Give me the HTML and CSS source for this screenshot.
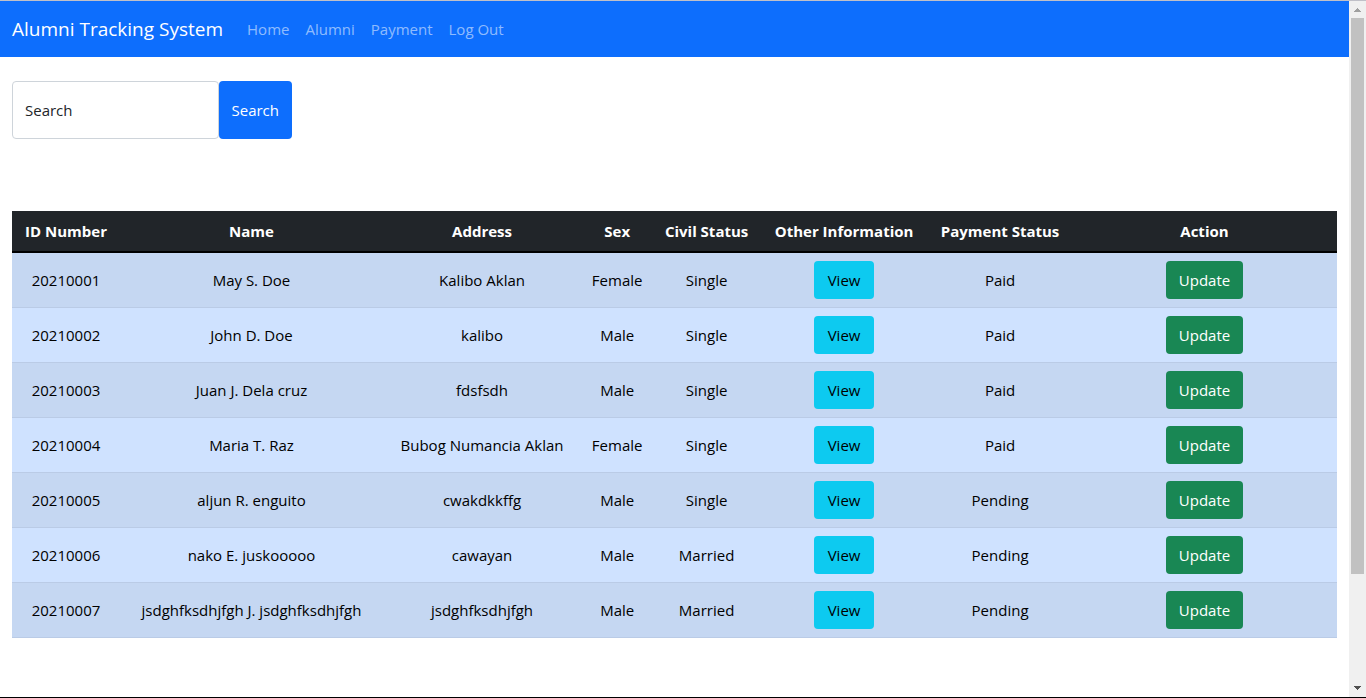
FILE: index.html
```html
<!DOCTYPE html>
<html lang="en">
<head>
<meta charset="utf-8">
<meta name="viewport" content="width=device-width, initial-scale=1">
<title>Alumni Tracking System</title>
<link rel="stylesheet" href="styles.css">
</head>
<body>
<div class="window">
  <div class="page">
    <nav class="navbar">
      <a class="brand" href="#">Alumni Tracking System</a>
      <a class="nav-link" href="#">Home</a>
      <a class="nav-link" href="#">Alumni</a>
      <a class="nav-link" href="#">Payment</a>
      <a class="nav-link" href="#">Log Out</a>
    </nav>
    <main class="content">
      <form class="search">
        <input class="search-input" type="text" placeholder="Search" aria-label="Search">
        <button class="btn btn-primary" type="button">Search</button>
      </form>
      <table class="table">
        <colgroup>
          <col class="col-id"><col class="col-name"><col class="col-address"><col class="col-sex">
          <col class="col-civil"><col class="col-info"><col class="col-payment"><col class="col-action">
        </colgroup>
        <thead>
          <tr><th>ID Number</th><th>Name</th><th>Address</th><th>Sex</th><th>Civil Status</th><th>Other Information</th><th>Payment Status</th><th>Action</th></tr>
        </thead>
        <tbody>
          <tr><td>20210001</td><td>May S. Doe</td><td>Kalibo Aklan</td><td>Female</td><td>Single</td><td><button class="btn btn-info" type="button">View</button></td><td>Paid</td><td><button class="btn btn-success" type="button">Update</button></td></tr>
          <tr><td>20210002</td><td>John D. Doe</td><td>kalibo</td><td>Male</td><td>Single</td><td><button class="btn btn-info" type="button">View</button></td><td>Paid</td><td><button class="btn btn-success" type="button">Update</button></td></tr>
          <tr><td>20210003</td><td>Juan J. Dela cruz</td><td>fdsfsdh</td><td>Male</td><td>Single</td><td><button class="btn btn-info" type="button">View</button></td><td>Paid</td><td><button class="btn btn-success" type="button">Update</button></td></tr>
          <tr><td>20210004</td><td>Maria T. Raz</td><td>Bubog Numancia Aklan</td><td>Female</td><td>Single</td><td><button class="btn btn-info" type="button">View</button></td><td>Paid</td><td><button class="btn btn-success" type="button">Update</button></td></tr>
          <tr><td>20210005</td><td>aljun R. enguito</td><td>cwakdkkffg</td><td>Male</td><td>Single</td><td><button class="btn btn-info" type="button">View</button></td><td>Pending</td><td><button class="btn btn-success" type="button">Update</button></td></tr>
          <tr><td>20210006</td><td>nako E. juskooooo</td><td>cawayan</td><td>Male</td><td>Married</td><td><button class="btn btn-info" type="button">View</button></td><td>Pending</td><td><button class="btn btn-success" type="button">Update</button></td></tr>
          <tr><td>20210007</td><td>jsdghfksdhjfgh J. jsdghfksdhjfgh</td><td>jsdghfksdhjfgh</td><td>Male</td><td>Married</td><td><button class="btn btn-info" type="button">View</button></td><td>Pending</td><td><button class="btn btn-success" type="button">Update</button></td></tr>
        </tbody>
      </table>
    </main>
  </div>
  <div class="scrollbar" aria-hidden="true">
    <svg class="arrow arrow-up" viewBox="0 0 17 17"><path d="M8 7h1v1h1v1h1v1h1v1H5v-1h1V9h1V8h1z"/></svg>
    <div class="track"><div class="thumb"></div></div>
    <svg class="arrow" viewBox="0 0 17 17"><path d="M5 6h7v1h-1v1h-1v1H9v1H8V9H7V8H6V7H5z"/></svg>
  </div>
</div>
</body>
</html>
```
FILE: styles.css
```css
* {
  box-sizing: border-box;
}

body {
  margin: 0;
  font-family: "Segoe UI", "Open Sans", "Noto Sans", sans-serif;
  font-size: 15px;
  line-height: 24px;
  color: #212529;
  background: #fff;
}

.window {
  display: flex;
  min-height: 100vh;
  border-top: 1px solid #c0c0c8;
  border-bottom: 1px solid #000;
}

.page {
  flex: 1;
  min-width: 0;
}

.navbar {
  display: flex;
  align-items: center;
  gap: 16px;
  padding: 13px 12px;
  background: #0d6efd;
}

.brand {
  margin-right: 8px;
  font-size: 19px;
  line-height: 30px;
  color: #fff;
  text-decoration: none;
  white-space: nowrap;
}

.nav-link {
  color: rgba(255, 255, 255, 0.55);
  text-decoration: none;
  white-space: nowrap;
}

.content {
  padding: 24px 12px;
}

.search {
  display: flex;
  width: 280px;
  height: 58px;
  margin-bottom: 72px;
}

.search-input {
  flex: 1;
  min-width: 0;
  padding: 0 12px;
  border: 1px solid #ced4da;
  border-radius: 4px;
  font: inherit;
  color: inherit;
  background: #fff;
}

.search-input::placeholder {
  color: #212529;
  opacity: 1;
}

.btn {
  padding: 6px 12px;
  border: 1px solid transparent;
  border-radius: 4px;
  font: inherit;
  cursor: pointer;
}

.btn-primary {
  background: #0d6efd;
  color: #fff;
}

.btn-info {
  min-width: 60px;
  background: #0dcaf0;
  color: #000;
}

.btn-success {
  min-width: 77px;
  background: #198754;
  color: #fff;
}

.table {
  width: 100%;
  table-layout: fixed;
  border-spacing: 0;
  color: #000;
  text-align: center;
  white-space: nowrap;
}

.col-id { width: 8.15%; }
.col-name { width: 19.85%; }
.col-address { width: 14.95%; }
.col-sex { width: 5.45%; }
.col-civil { width: 8.05%; }
.col-info { width: 12.7%; }
.col-payment { width: 10.85%; }
.col-action { width: 20%; }

.table th {
  padding: 8px 4px;
  border-bottom: 2px solid #000;
  background: #212529;
  color: #fff;
  font-weight: 700;
}

.table td {
  padding: 8px 4px;
  border-bottom: 1px solid #bacbe6;
  background: #cfe2ff;
  vertical-align: middle;
}

.table tbody tr:nth-child(odd) td {
  background: #c5d7f2;
}

.table .btn {
  display: block;
  margin: 0 auto;
}

.scrollbar {
  display: flex;
  flex-direction: column;
  width: 17px;
  background: #f0f0f0;
}

.arrow {
  width: 17px;
  height: 17px;
  fill: #505050;
}

.arrow-up {
  fill: #a0a0a0;
}

.track {
  flex: 1;
  padding: 0 2px;
}

.thumb {
  height: 84%;
  background: #c1c1c1;
}
```
